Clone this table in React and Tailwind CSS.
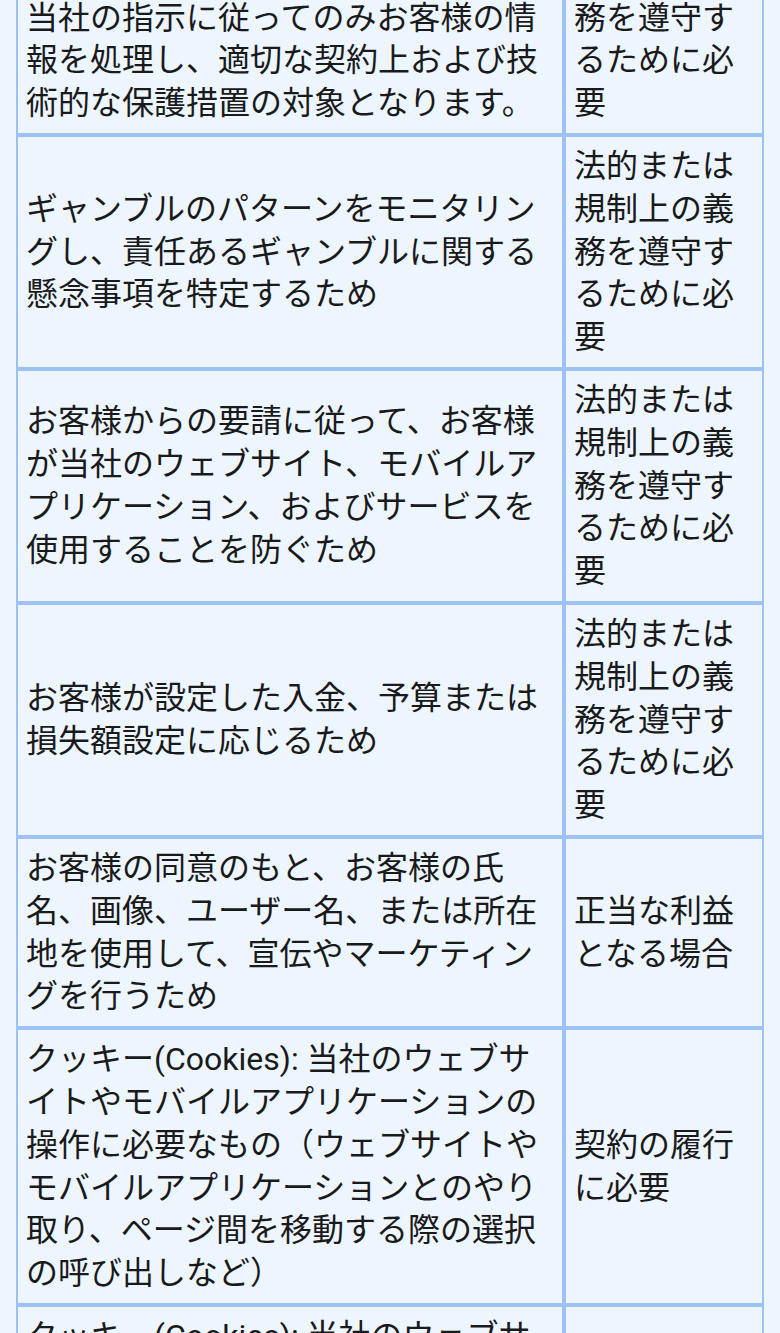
const rows = [
  {
    purpose:
      "お客様の情報を第三者のサービスプロバイダーと共有するため。彼らは当社の指示に従ってのみお客様の情報を処理し、適切な契約上および技術的な保護措置の対象となります。",
    basis: "法的または規制上の義務を遵守するために必要",
  },
  {
    purpose:
      "ギャンブルのパターンをモニタリングし、責任あるギャンブルに関する懸念事項を特定するため",
    basis: "法的または規制上の義務を遵守するために必要",
  },
  {
    purpose:
      "お客様からの要請に従って、お客様が当社のウェブサイト、モバイルアプリケーション、およびサービスを使用することを防ぐため",
    basis: "法的または規制上の義務を遵守するために必要",
  },
  {
    purpose: "お客様が設定した入金、予算または損失額設定に応じるため",
    basis: "法的または規制上の義務を遵守するために必要",
  },
  {
    purpose:
      "お客様の同意のもと、お客様の氏名、画像、ユーザー名、または所在地を使用して、宣伝やマーケティングを行うため",
    basis: "正当な利益となる場合",
  },
  {
    purpose:
      "クッキー(Cookies): 当社のウェブサイトやモバイルアプリケーションの操作に必要なもの（ウェブサイトやモバイルアプリケーションとのやり取り、ページ間を移動する際の選択の呼び出しなど）",
    basis: "契約の履行に必要",
  },
  {
    purpose:
      "クッキー(Cookies): 当社のウェブサイトやモバイルアプリケーションの機能を向上させ、お客様の利用状況を分析するためのもの",
    basis: "正当な利益となる場合",
  },
];

export default function App() {
  return (
    <div
      className="flex h-screen flex-col overflow-hidden bg-[#edf5ff] px-4 text-[32px] leading-[42.8px] text-[#1a1a1a]"
      style={{ fontFamily: 'Roboto, "Noto Sans CJK JP", sans-serif' }}
    >
      <table className="-mt-[99px] w-full table-fixed border-separate border-spacing-0">
        <colgroup>
          <col className="w-[548px]" />
          <col className="w-[200px]" />
        </colgroup>
        <tbody>
          {rows.map((row, i) => (
            <tr key={i}>
              <td className="border-2 border-[#9dc3f6] py-2 pl-2 pr-2.5 align-middle">
                {row.purpose}
              </td>
              <td className="border-2 border-[#9dc3f6] py-2 pl-2 pr-2.5 align-middle">
                {row.basis}
              </td>
            </tr>
          ))}
        </tbody>
      </table>
    </div>
  );
}
